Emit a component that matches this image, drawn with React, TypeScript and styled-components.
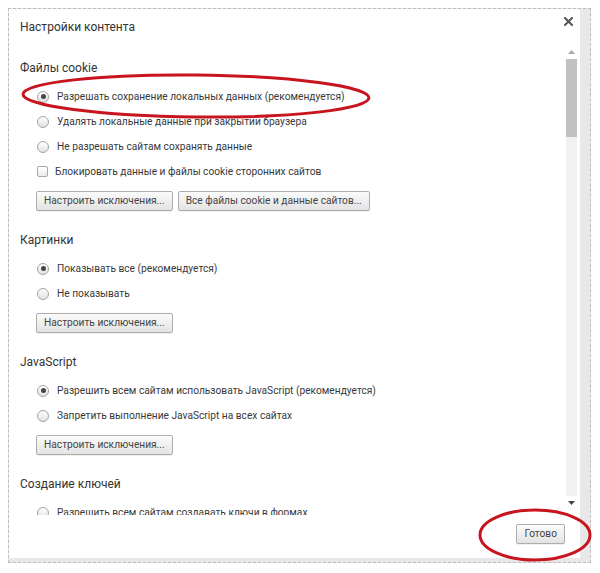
import styled, { createGlobalStyle } from 'styled-components';

const GlobalStyle = createGlobalStyle`
  body {
    margin: 0;
    background: #ffffff;
    font-family: Roboto, 'Noto Sans', sans-serif;
  }
`;

type Choice = { label: string; kind: 'radio' | 'check'; checked?: boolean };
type Section = { title: string; choices: Choice[]; buttons: string[] };

const sections: Section[] = [
  {
    title: 'Файлы cookie',
    choices: [
      { label: 'Разрешать сохранение локальных данных (рекомендуется)', kind: 'radio', checked: true },
      { label: 'Удалять локальные данные при закрытии браузера', kind: 'radio' },
      { label: 'Не разрешать сайтам сохранять данные', kind: 'radio' },
      { label: 'Блокировать данные и файлы cookie сторонних сайтов', kind: 'check' },
    ],
    buttons: ['Настроить исключения...', 'Все файлы cookie и данные сайтов...'],
  },
  {
    title: 'Картинки',
    choices: [
      { label: 'Показывать все (рекомендуется)', kind: 'radio', checked: true },
      { label: 'Не показывать', kind: 'radio' },
    ],
    buttons: ['Настроить исключения...'],
  },
  {
    title: 'JavaScript',
    choices: [
      { label: 'Разрешить всем сайтам использовать JavaScript (рекомендуется)', kind: 'radio', checked: true },
      { label: 'Запретить выполнение JavaScript на всех сайтах', kind: 'radio' },
    ],
    buttons: ['Настроить исключения...'],
  },
  {
    title: 'Создание ключей',
    choices: [{ label: 'Разрешить всем сайтам создавать ключи в формах', kind: 'radio' }],
    buttons: [],
  },
];

export default function App() {
  return (
    <>
      <GlobalStyle />
      <Page>
        <Frame>
          <Dialog>
            <Header>
              <Title>Настройки контента</Title>
              <Close aria-label="Закрыть">
                <svg width="9" height="9" viewBox="0 0 9 9">
                  <path d="M1 1 L8 8 M8 1 L1 8" stroke="#555" strokeWidth="2" strokeLinecap="square" />
                </svg>
              </Close>
            </Header>
            <Body>
              <Content>
                {sections.map((s) => (
                  <Group key={s.title}>
                    <Heading>{s.title}</Heading>
                    {s.choices.map((c) => (
                      <Row key={c.label}>
                        {c.kind === 'radio' ? <Radio $checked={!!c.checked} /> : <Check />}
                        <Label>{c.label}</Label>
                      </Row>
                    ))}
                    {s.buttons.length > 0 && (
                      <Buttons>
                        {s.buttons.map((b) => (
                          <Button key={b}>{b}</Button>
                        ))}
                      </Buttons>
                    )}
                  </Group>
                ))}
              </Content>
              <Scrollbar>
                <Arrow>
                  <svg width="7" height="4" viewBox="0 0 7 4">
                    <path d="M0 4 L3.5 0 L7 4 Z" fill="#a8a8a8" />
                  </svg>
                </Arrow>
                <Thumb />
                <Track />
                <Arrow>
                  <svg width="7" height="4" viewBox="0 0 7 4">
                    <path d="M0 0 L3.5 4 L7 0 Z" fill="#444" />
                  </svg>
                </Arrow>
              </Scrollbar>
            </Body>
            <Footer>
              <Button>Готово</Button>
            </Footer>
          </Dialog>
        </Frame>
        <Marks width="600" height="573" viewBox="0 0 600 573">
          <ellipse cx="196" cy="96" rx="173" ry="21" fill="none" stroke="#c8141e" strokeWidth="3" transform="rotate(0.6 196 96)" />
          <ellipse cx="535" cy="535" rx="55" ry="25" fill="none" stroke="#c8141e" strokeWidth="3" />
        </Marks>
      </Page>
    </>
  );
}

const Page = styled.div`
  position: relative;
  width: 600px;
  height: 573px;
  padding: 8px 0 0 8px;
  box-sizing: border-box;
`;

const Frame = styled.div`
  width: 583px;
  height: 555px;
  box-sizing: border-box;
  border: 1px dashed #bcbcbc;
  background: #e8e8e8;
  padding: 0 10px 4px 0;
  display: flex;
`;

const Dialog = styled.div`
  flex: 1;
  background: #ffffff;
  display: flex;
  flex-direction: column;
  color: #333;
`;

const Header = styled.div`
  height: 35px;
  flex-shrink: 0;
  display: flex;
  align-items: center;
  justify-content: space-between;
  padding: 0 6px 0 11px;
`;

const Title = styled.div`
  font-size: 12px;
  color: #333;
`;

const Close = styled.div`
  width: 12px;
  height: 12px;
  display: flex;
  align-items: center;
  justify-content: center;
  align-self: flex-start;
  margin-top: 6px;
`;

const Body = styled.div`
  height: 471px;
  flex-shrink: 0;
  display: flex;
`;

const Content = styled.div`
  flex: 1;
  overflow: hidden;
  padding: 14px 0 0 11px;
`;

const Group = styled.div`
  & + & {
    margin-top: 19px;
  }
`;

const Heading = styled.div`
  height: 20px;
  line-height: 20px;
  font-size: 12px;
  color: #333;
  margin-bottom: 6px;
`;

const Row = styled.div`
  height: 25px;
  display: flex;
  align-items: center;
  padding-left: 17px;
  gap: 8px;
`;

const Radio = styled.span<{ $checked: boolean }>`
  width: 12px;
  height: 12px;
  box-sizing: border-box;
  border-radius: 50%;
  border: 1px solid #a4a4a4;
  background: linear-gradient(#ffffff, #e2e2e2);
  display: flex;
  align-items: center;
  justify-content: center;
  flex-shrink: 0;
  &::after {
    content: '';
    width: 5px;
    height: 5px;
    border-radius: 50%;
    background: #464646;
    display: ${(p) => (p.$checked ? 'block' : 'none')};
  }
`;

const Check = styled.span`
  width: 11px;
  height: 11px;
  box-sizing: border-box;
  border: 1px solid #a8a8a8;
  border-radius: 2px;
  background: linear-gradient(#ffffff, #ececec);
  flex-shrink: 0;
  margin-right: -1px;
`;

const Label = styled.span`
  font-size: 10.2px;
  color: #383838;
  white-space: nowrap;
`;

const Buttons = styled.div`
  display: flex;
  gap: 5px;
  margin-top: 7px;
  padding-left: 16px;
`;

const Button = styled.button`
  height: 20px;
  padding: 0 7px;
  border: 1px solid #adadad;
  border-radius: 2px;
  background: linear-gradient(#fbfbfb, #e3e3e3);
  box-shadow: 0 1px 0 rgba(0, 0, 0, 0.06);
  font-family: Roboto, 'Noto Sans', sans-serif;
  font-size: 10.2px;
  color: #444;
  line-height: 18px;
`;

const Scrollbar = styled.div`
  width: 11px;
  margin: 1px 3px 5px 0;
  background: #f1f1f1;
  display: flex;
  flex-direction: column;
`;

const Arrow = styled.div`
  height: 14px;
  display: flex;
  align-items: center;
  justify-content: center;
  background: #ffffff;
`;

const Thumb = styled.div`
  height: 78px;
  background: #c1c1c1;
`;

const Track = styled.div`
  flex: 1;
`;

const Footer = styled.div`
  flex: 1;
  display: flex;
  justify-content: flex-end;
  align-items: flex-start;
  padding: 9px 15px 0 0;
`;

const Marks = styled.svg`
  position: absolute;
  left: 0;
  top: 0;
  pointer-events: none;
`;
